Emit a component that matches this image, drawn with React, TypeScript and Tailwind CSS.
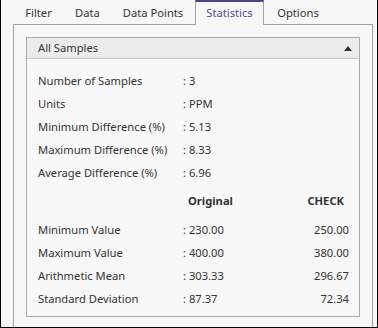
const tabs = [
  { name: "Filter", w: "w-[51px]" },
  { name: "Data", w: "w-[47px]" },
  { name: "Data Points", w: "w-[84px]" },
  { name: "Statistics", w: "w-[69px]", active: true },
  { name: "Options", w: "w-[68px]" },
];

const summary = [
  ["Number of Samples", "3"],
  ["Units", "PPM"],
  ["Minimum Difference (%)", "5.13"],
  ["Maximum Difference (%)", "8.33"],
  ["Average Difference (%)", "6.96"],
];

const compare = [
  ["Minimum Value", "230.00", "250.00"],
  ["Maximum Value", "400.00", "380.00"],
  ["Arithmetic Mean", "303.33", "296.67"],
  ["Standard Deviation", "87.37", "72.34"],
];

const App = () => {
  return (
    <div
      className="w-[378px] h-[328px] flex flex-col bg-[#f7f7f7] border-x border-b border-black text-[11.2px] text-[#333333] overflow-hidden"
      style={{ fontFamily: '"Noto Sans", "Open Sans", sans-serif' }}
    >
      {/* Tabs */}
      <div className="flex h-[24px] pl-[12px] shrink-0">
        {tabs.map((t) =>
          t.active ? (
            <div
              key={t.name}
              className={`${t.w} h-[25px] pb-[1px] relative z-10 flex items-center justify-center border-x border-t-2 border-x-[#a0a0a0] border-t-[#4e4286] bg-[#f7f7f7] text-[#564a8c]`}
            >
              {t.name}
            </div>
          ) : (
            <div key={t.name} className={`${t.w} pt-[3px] flex items-center justify-center`}>
              {t.name}
            </div>
          )
        )}
      </div>

      {/* Tab panel */}
      <div className="flex-1 ml-[12px] mr-[4px] border-x border-t border-[#a0a0a0] px-[12px] pt-[12px] pb-[10px] flex flex-col">
        <div className="flex-1 border border-[#ababab] bg-[#f8f8f8] flex flex-col">
          {/* Group header */}
          <div className="h-[21px] shrink-0 flex items-center justify-between pl-[11px] pr-[7px] bg-[#ececec] border-b border-[#c9c9c9]">
            <span>All Samples</span>
            <svg width="8" height="5" viewBox="0 0 8 5">
              <path d="M0 5 L4 0 L8 5 Z" fill="#333333" />
            </svg>
          </div>

          {/* Stats */}
          <div className="pl-[11px] pr-[10px] pt-[11px] flex flex-col">
            {summary.map(([label, value]) => (
              <div key={label} className="h-[23px] flex items-center">
                <span className="w-[145px]">{label}</span>
                <span>: {value}</span>
              </div>
            ))}

            <div className="h-[23px] mt-[5px] flex items-center font-bold">
              <span className="w-[150px]" />
              <span className="flex-1">Original</span>
              <span className="pr-[5px]">CHECK</span>
            </div>

            <div className="mt-[6px] flex flex-col">
              {compare.map(([label, a, b]) => (
                <div key={label} className="h-[23px] flex items-center">
                  <span className="w-[145px]">{label}</span>
                  <span className="flex-1">: {a}</span>
                  <span>{b}</span>
                </div>
              ))}
            </div>
          </div>
        </div>
      </div>
    </div>
  );
};

export default App;
